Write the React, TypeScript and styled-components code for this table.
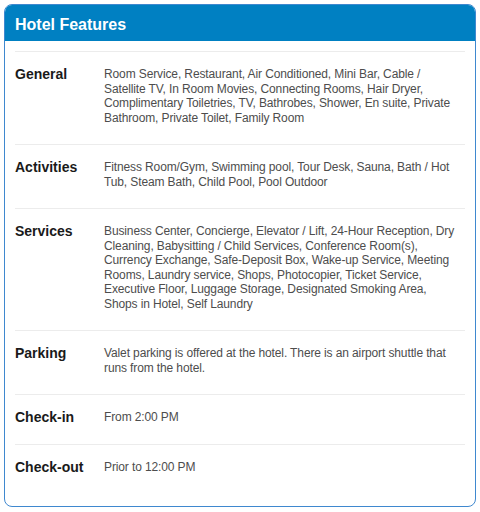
import React from "react";
import styled, { createGlobalStyle } from "styled-components";

const GlobalStyle = createGlobalStyle`
  body {
    margin: 0;
    padding: 4px;
    background: #fff;
    font-family: "Liberation Sans", Arial, sans-serif;
  }
`;

const StyledCard = styled.div`
  width: 470px;
  border: 1px solid #3f88cf;
  border-radius: 8px;
  overflow: hidden;
  background: #fff;
`;

const StyledHeader = styled.div`
  background-color: #0080c2;
  color: #fff;
  font-size: 16px;
  font-weight: 700;
  height: 36px;
  line-height: 39px;
  padding: 0 10px;
`;

const StyledBody = styled.div`
  padding: 10px 10px 13px;
`;

const StyledRow = styled.div`
  display: flex;
  border-top: 1px solid #ececec;
  padding: 15px 0 19px;
`;

const StyledLabel = styled.div`
  width: 89px;
  flex-shrink: 0;
  font-size: 14px;
  font-weight: 700;
  color: #1a1a1a;
  line-height: 14.5px;
`;

const StyledValue = styled.div`
  flex: 1;
  font-size: 12px;
  line-height: 14.5px;
  letter-spacing: -0.12px;
  color: #4d4d4d;
  padding-right: 6px;
`;

const features = [
  {
    label: "General",
    value:
      "Room Service, Restaurant, Air Conditioned, Mini Bar, Cable / Satellite TV, In Room Movies, Connecting Rooms, Hair Dryer, Complimentary Toiletries, TV, Bathrobes, Shower, En suite, Private Bathroom, Private Toilet, Family Room",
  },
  {
    label: "Activities",
    value:
      "Fitness Room/Gym, Swimming pool, Tour Desk, Sauna, Bath / Hot Tub, Steam Bath, Child Pool, Pool Outdoor",
  },
  {
    label: "Services",
    value:
      "Business Center, Concierge, Elevator / Lift, 24-Hour Reception, Dry Cleaning, Babysitting / Child Services, Conference Room(s), Currency Exchange, Safe-Deposit Box, Wake-up Service, Meeting Rooms, Laundry service, Shops, Photocopier, Ticket Service, Executive Floor, Luggage Storage, Designated Smoking Area, Shops in Hotel, Self Laundry",
  },
  {
    label: "Parking",
    value:
      "Valet parking is offered at the hotel. There is an airport shuttle that runs from the hotel.",
  },
  { label: "Check-in", value: "From 2:00 PM" },
  { label: "Check-out", value: "Prior to 12:00 PM" },
];

export default function App() {
  return (
    <>
      <GlobalStyle />
      <StyledCard>
        <StyledHeader>Hotel Features</StyledHeader>
        <StyledBody>
          {features.map((item) => (
            <StyledRow key={item.label}>
              <StyledLabel>{item.label}</StyledLabel>
              <StyledValue>{item.value}</StyledValue>
            </StyledRow>
          ))}
        </StyledBody>
      </StyledCard>
    </>
  );
}
